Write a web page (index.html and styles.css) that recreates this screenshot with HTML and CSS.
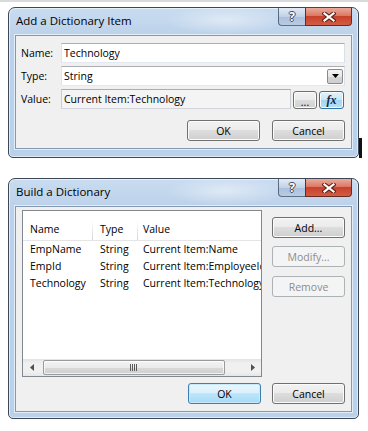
FILE: index.html
```html
<!DOCTYPE html>
<html lang="en">
<head>
  <meta charset="UTF-8">
  <title>Dictionary dialogs</title>
  <link rel="stylesheet" href="styles.css">
</head>
<body>

<div class="screen">
  <div class="top-row">
    <div class="dialog dlg-item">
      <div class="titlebar">
        <span class="title">Add a Dictionary Item</span>
        <div class="caption-btns">
          <span class="cap-help">?</span>
          <span class="cap-close">
            <svg width="14" height="10" viewBox="0 0 14 10">
              <path d="M2.5 1.5 L11.5 8.5 M11.5 1.5 L2.5 8.5" stroke="#5a2118" stroke-width="4.2" stroke-linecap="square"/>
              <path d="M2.5 1.5 L11.5 8.5 M11.5 1.5 L2.5 8.5" stroke="#fff" stroke-width="2.2" stroke-linecap="square"/>
            </svg>
          </span>
        </div>
      </div>
      <div class="client client-item">
        <div class="field-row">
          <label>Name:</label>
          <div class="textbox">Technology</div>
        </div>
        <div class="field-row">
          <label>Type:</label>
          <div class="textbox combo">
            <span>String</span>
            <span class="combo-btn">
              <svg width="7" height="4" viewBox="0 0 7 4"><path d="M0 0 H7 L3.5 4 Z" fill="#000"/></svg>
            </span>
          </div>
        </div>
        <div class="field-row">
          <label>Value:</label>
          <div class="textbox readonly">Current Item:Technology</div>
          <button class="btn btn-dots">...</button>
          <button class="btn btn-fx">fx</button>
        </div>
        <div class="dlg-buttons">
          <button class="btn">OK</button>
          <button class="btn">Cancel</button>
        </div>
      </div>
    </div>
    <div class="edge-mark"></div>
  </div>

  <div class="dialog dlg-list">
    <div class="titlebar">
      <span class="title">Build a Dictionary</span>
      <div class="caption-btns">
        <span class="cap-help">?</span>
        <span class="cap-close">
          <svg width="14" height="10" viewBox="0 0 14 10">
            <path d="M2.5 1.5 L11.5 8.5 M11.5 1.5 L2.5 8.5" stroke="#5a2118" stroke-width="4.2" stroke-linecap="square"/>
            <path d="M2.5 1.5 L11.5 8.5 M11.5 1.5 L2.5 8.5" stroke="#fff" stroke-width="2.2" stroke-linecap="square"/>
          </svg>
        </span>
      </div>
    </div>
    <div class="client client-list">
      <div class="list-area">
        <div class="listview">
          <div class="lv-head">
            <span>Name</span>
            <span>Type</span>
            <span>Value</span>
          </div>
          <div class="lv-rows">
            <div class="lv-row"><span>EmpName</span><span>String</span><span>Current Item:Name</span></div>
            <div class="lv-row"><span>EmpId</span><span>String</span><span>Current Item:EmployeeId</span></div>
            <div class="lv-row"><span>Technology</span><span>String</span><span>Current Item:Technology</span></div>
          </div>
          <div class="hscroll">
            <span class="sb-arrow">
              <svg width="4" height="7" viewBox="0 0 4 7"><path d="M4 0 V7 L0 3.5 Z" fill="#505050"/></svg>
            </span>
            <span class="sb-thumb">
              <svg width="8" height="7" viewBox="0 0 8 7">
                <path d="M0.5 0 V7 M2.5 0 V7 M4.5 0 V7 M6.5 0 V7" stroke="#5a5a5a" stroke-width="1"/>
              </svg>
            </span>
            <span class="sb-track"></span>
            <span class="sb-arrow">
              <svg width="4" height="7" viewBox="0 0 4 7"><path d="M0 0 V7 L4 3.5 Z" fill="#505050"/></svg>
            </span>
          </div>
        </div>
        <div class="side-btns">
          <button class="btn">Add...</button>
          <button class="btn" disabled>Modify...</button>
          <button class="btn btn-remove" disabled>Remove</button>
        </div>
      </div>
      <div class="dlg-buttons">
        <button class="btn btn-default">OK</button>
        <button class="btn">Cancel</button>
      </div>
    </div>
  </div>
</div>

</body>
</html>
```

FILE: styles.css
```css
* {
  box-sizing: border-box;
}
body {
  margin: 0;
  background: #fff;
  border-top: 2px solid #dadada;
  font-family: "Open Sans", "Noto Sans", sans-serif;
  font-size: 10.5px;
  color: #000;
}
.screen {
  padding: 5px 0 0 8px;
}
.top-row {
  display: flex;
  align-items: flex-end;
}
.edge-mark {
  width: 3px;
  height: 20px;
  background: #111;
}

/* window frame */
.dialog {
  width: 351px;
  border: 1px solid #3e4756;
  border-radius: 7px 7px 5px 5px;
  padding: 0 6px 8px;
  background:
    radial-gradient(ellipse 60px 14px at 62% 12px, rgba(255,255,255,0.45), transparent),
    linear-gradient(to bottom, #c9dcf0 0, #bcd2ea 28px, #b9d1eb 100%);
  box-shadow: inset 0 0 0 1px rgba(255,255,255,0.55);
}
.dlg-list {
  margin-top: 20px;
  padding-bottom: 6px;
}
.titlebar {
  height: 27px;
  display: flex;
  justify-content: space-between;
  align-items: flex-start;
}
.title {
  padding: 5px 0 0 1px;
  font-size: 11.5px;
  line-height: 16px;
}
.caption-btns {
  display: flex;
}
.cap-help,
.cap-close {
  height: 18px;
  display: flex;
  align-items: center;
  justify-content: center;
}
.cap-help {
  width: 27px;
  border: 1px solid rgba(55,70,92,0.75);
  border-top: none;
  border-right: none;
  border-radius: 0 0 0 4px;
  background: linear-gradient(#e2ebf6, #c1d2e7 50%, #a9bfdc 51%, #b8cce4);
  color: #fff;
  font-weight: bold;
  font-size: 12px;
  text-shadow: 1px 0 #3d4b60, -1px 0 #3d4b60, 0 1px #3d4b60, 0 -1px #3d4b60;
}
.cap-close {
  width: 47px;
  border: 1px solid #6a2a20;
  border-top: none;
  border-radius: 0 0 4px 0;
  background: linear-gradient(#ebab9c, #dc7863 45%, #c8412b 50%, #d35c44);
}

/* client area */
.client {
  background: #f0f0f0;
  border: 1px solid #8598b1;
  box-shadow: 0 0 0 1px rgba(255,255,255,0.6);
}
.client-item {
  height: 114px;
  padding: 7px 6px 0 5px;
  display: flex;
  flex-direction: column;
  gap: 3px;
}
.field-row {
  display: flex;
  align-items: center;
  height: 20px;
}
.field-row label {
  width: 40px;
}
.textbox {
  flex: 1;
  height: 20px;
  border: 1px solid;
  border-color: #abadb3 #dbdfe6 #e3e9ef #e2e3ea;
  background: #fff;
  padding: 0 2px;
  line-height: 18px;
}
.combo {
  display: flex;
  align-items: center;
  padding-right: 1px;
}
.combo-btn {
  width: 16px;
  height: 15px;
  margin-left: auto;
  border: 1px solid #8a8a8a;
  border-radius: 2px;
  background: linear-gradient(#f4f4f4, #e6e6e6 50%, #d5d5d5 51%, #cfcfcf);
  display: flex;
  align-items: center;
  justify-content: center;
}
.readonly {
  flex: none;
  width: 230px;
  background: #f4f4f4;
  border-color: #abadb3 #c9ccd2 #d2d6dc #c9ccd2;
}

/* buttons */
.btn {
  width: 73px;
  height: 21px;
  padding: 0;
  font: inherit;
  color: #000;
  border: 1px solid #707070;
  border-radius: 3px;
  background: linear-gradient(#f2f2f2, #ebebeb 49%, #dddddd 50%, #cfcfcf);
  box-shadow: inset 0 0 0 1px #fbfbfb;
}
.btn:disabled {
  color: #8d8d8d;
  border-color: #adb2b5;
  background: #f4f4f4;
  box-shadow: none;
}
.btn-default {
  border-color: #3c7fb1;
  background: linear-gradient(#eaf6fd, #d9f0fc 49%, #bee6fd 50%, #a7d9f5);
  box-shadow: inset 0 0 0 1px #c9eafb;
}
.btn-dots {
  width: 24px;
  height: 18px;
  margin-left: 2px;
  align-self: flex-end;
  line-height: 20px;
}
.btn-fx {
  width: 25px;
  height: 18px;
  margin-left: 2px;
  align-self: flex-end;
  border-color: #2f73a8;
  background: linear-gradient(#e3f3fc, #c6e6f8 50%, #a2d5f2 51%, #b7e0f6);
  font-family: "Liberation Serif", "DejaVu Serif", serif;
  font-style: italic;
  font-weight: bold;
  font-size: 12px;
  color: #16243c;
}
.dlg-buttons {
  display: flex;
  justify-content: flex-end;
  gap: 12px;
  margin-top: 8px;
}

/* list dialog */
.client-list {
  padding: 3px 6px 7px;
}
.client-list .dlg-buttons {
  gap: 11px;
  margin-top: 6px;
}
.list-area {
  display: flex;
  gap: 10px;
}
.listview {
  width: 240px;
  height: 167px;
  border: 1px solid #828790;
  background: #fff;
  display: flex;
  flex-direction: column;
  overflow: hidden;
}
.lv-head,
.lv-row {
  display: grid;
  grid-template-columns: 70px 45px 1fr;
  white-space: nowrap;
}
.lv-head {
  height: 30px;
  border-bottom: 1px solid #e5e5e5;
  align-items: end;
}
.lv-head span {
  padding: 0 0 3px 7px;
  line-height: 15px;
}
.lv-head span:nth-child(1),
.lv-head span:nth-child(2) {
  background: linear-gradient(to bottom, rgba(213,213,213,0), #d5d5d5) right bottom / 1px 20px no-repeat;
}
.lv-rows {
  flex: 1;
}
.lv-row {
  line-height: 17px;
}
.lv-row span {
  padding-left: 7px;
  overflow: hidden;
}
.lv-head span:nth-child(3),
.lv-row span:nth-child(3) {
  padding-left: 5px;
}
.hscroll {
  height: 17px;
  display: flex;
  align-items: center;
  background: linear-gradient(#e3e3e3, #f0f0f0 25%, #f0f0f0 75%, #e6e6e6);
}
.sb-arrow {
  width: 17px;
  height: 17px;
  display: flex;
  align-items: center;
  justify-content: center;
}
.sb-thumb {
  width: 182px;
  height: 15px;
  margin-left: 3px;
  border: 1px solid #9a9a9a;
  border-radius: 2px;
  background: linear-gradient(#f4f4f4, #eaeaea 50%, #d9d9d9 51%, #d0d0d0);
  box-shadow: inset 0 0 0 1px rgba(255,255,255,0.7);
  display: flex;
  align-items: center;
  justify-content: center;
}
.sb-track {
  flex: 1;
}
.side-btns {
  display: flex;
  flex-direction: column;
  gap: 8px;
  padding-top: 7px;
}
.btn-remove {
  margin-top: 1px;
}
```
